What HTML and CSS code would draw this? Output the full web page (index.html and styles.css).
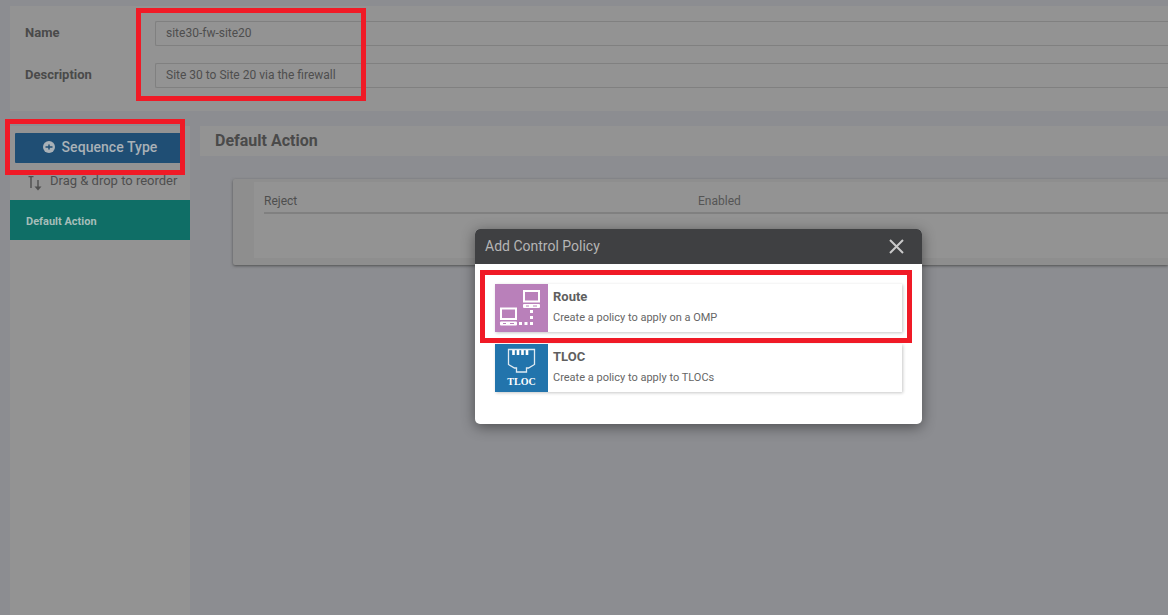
FILE: index.html
```html
<!DOCTYPE html>
<html lang="en">
<head>
<meta charset="utf-8">
<title>Add Control Policy</title>
<link rel="stylesheet" href="styles.css">
</head>
<body>
<div class="page">
  <section class="form-panel">
    <div class="form-row"><label class="form-label">Name</label><div class="form-input">site30-fw-site20</div></div>
    <div class="form-row"><label class="form-label">Description</label><div class="form-input">Site 30 to Site 20 via the firewall</div></div>
  </section>
  <div class="columns">
    <aside class="sidebar">
      <button class="seq-btn">
        <svg class="seq-icon" viewBox="0 0 12 12"><circle cx="6" cy="6" r="6" fill="#a9b1b7"/><path d="M2.500 6h7M6 3.500v5" stroke="#1f4e74" stroke-width="1.500"/></svg>
        <span class="seq-label">Sequence Type</span>
      </button>
      <div class="drag-hint">
        <svg class="drag-icon" viewBox="0 0 17 19"><path d="M4 3v11M1.500 2.600h5" stroke="#4f4f4f" stroke-width="1.400" fill="none"/><path d="M11 6v8" stroke="#4f4f4f" stroke-width="1.400"/><path d="M7.500 12.500h7L11 16.500z" fill="#4f4f4f"/></svg>
        Drag &amp; drop to reorder
      </div>
      <div class="seq-item">Default Action</div>
    </aside>
    <main class="main">
      <h2 class="main-title">Default Action</h2>
      <div class="action-card">
        <div class="action-inner">
          <div class="action-row"><span class="action-name">Reject</span><span class="action-state">Enabled</span></div>
        </div>
      </div>
    </main>
  </div>
</div>

<div class="annot annot-form"></div>
<div class="annot annot-seq"></div>

<div class="modal">
  <header class="modal-head">
    <span class="modal-title">Add Control Policy</span>
    <svg class="modal-close" viewBox="0 0 15 15"><path d="M1 1l13 13M14 1L1 14" stroke="#c9c9c9" stroke-width="2"/></svg>
  </header>
  <div class="modal-body">
    <div class="policy">
      <div class="policy-icon route">
        <svg viewBox="0 0 53 48" width="53" height="48" fill="none">
          <rect x="29" y="7" width="15" height="10.500" stroke="#fff" stroke-width="2"/>
          <rect x="28" y="20" width="17" height="4" rx="1" fill="#fff"/>
          <path d="M31 22h3M38 22h4" stroke="#b980ba"/>
          <rect x="6" y="24.500" width="15" height="10.500" stroke="#fff" stroke-width="2"/>
          <rect x="5" y="37.500" width="17" height="4" rx="1" fill="#fff"/>
          <path d="M8 39.500h3M15 39.500h4" stroke="#b980ba"/>
          <path d="M35 26h3v3h-3zM35 32h3v3h-3zM35 38h3v3h-3zM24 38h3v3h-3zM29.500 38h3v3h-3z" fill="#fff"/>
        </svg>
      </div>
      <div class="policy-text"><div class="policy-name">Route</div><div class="policy-desc">Create a policy to apply on a OMP</div></div>
    </div>
    <div class="policy">
      <div class="policy-icon tloc">
        <svg class="tloc-svg" viewBox="0 0 53 31" width="53" height="31" fill="none">
          <path d="M13.500 5.500h26v15l-6 3.500h-2v4h-10v-4h-2l-6-3.500z" stroke="#dfeaf2" stroke-width="1.300"/>
          <path d="M18.500 6v5M23 6v5M27.500 6v5M32 6v5" stroke="#fff" stroke-width="2.600"/>
        </svg>
        <span class="tloc-label">TLOC</span>
      </div>
      <div class="policy-text"><div class="policy-name">TLOC</div><div class="policy-desc">Create a policy to apply to TLOCs</div></div>
    </div>
  </div>
</div>
<div class="annot annot-route"></div>
</body>
</html>
```
FILE: styles.css
```css
* { box-sizing: border-box; }
html, body { margin: 0; height: 100%; }
body {
  background: #8c8d91;
  font-family: Roboto, "Liberation Sans", sans-serif;
  color: #4e4e4e;
  overflow: hidden;
}
.page {
  height: 615px;
  padding: 6px 0 0 10px;
  display: flex;
  flex-direction: column;
  gap: 15px;
}
.form-panel {
  background: #939393;
  height: 105px;
  padding: 15px 0 0 15px;
  display: flex;
  flex-direction: column;
  gap: 17px;
}
.form-row { display: flex; align-items: center; height: 25px; }
.form-label { width: 130px; margin-top: -3px; font-size: 13px; font-weight: 700; color: #4a4a4a; }
.form-input {
  flex: 1;
  height: 25px;
  border: 1px solid #808080;
  border-right: 0;
  border-radius: 2px 0 0 2px;
  padding: 0 0 0 10px;
  font-size: 12px;
  line-height: 23px;
  color: #4e4e4e;
}
.columns { flex: 1; display: flex; gap: 10px; }
.sidebar { width: 180px; background: #939393; display: flex; flex-direction: column; }
.seq-btn {
  margin: 7px 0 0 5px;
  width: 170px;
  height: 30px;
  border: 0;
  border-radius: 1px;
  background: #1f4e74;
  color: #a9b1b7;
  font: 500 14px Roboto, "Liberation Sans", sans-serif;
  letter-spacing: .05px;
  display: flex;
  align-items: center;
  justify-content: center;
  gap: 7px;
  padding: 0 0 3px;
}
.seq-icon { width: 12px; height: 12px; }
.seq-label { display: block; }
.drag-hint {
  height: 37px;
  padding: 0 0 2px 17px;
  display: flex;
  align-items: center;
  gap: 6px;
  font-size: 13px;
  color: #4e4e4e;
}
.drag-icon { width: 17px; height: 19px; margin-top: 6px; }
.seq-item {
  height: 40px;
  background: #0f6e66;
  color: #a5bdb9;
  font-size: 11px;
  font-weight: 700;
  line-height: 43px;
  padding-left: 16px;
}
.main { flex: 1; display: flex; flex-direction: column; }
.main-title {
  margin: 0;
  height: 30px;
  background: #939393;
  padding-left: 15px;
  font-size: 16px;
  font-weight: 700;
  line-height: 30px;
  color: #4a4a4a;
}
.action-card {
  margin: 23px 0 0 33px;
  height: 86px;
  background: #8e8e8e;
  border-radius: 2px 0 0 2px;
  box-shadow: 0 1px 3px #505050;
  padding: 3px 0 7px 21px;
  display: flex;
}
.action-inner { flex: 1; background: #939393; padding: 0 0 0 10px; }
.action-row {
  display: flex;
  height: 32px;
  border-bottom: 2px solid #808080;
  font-size: 12px;
  line-height: 39px;
  color: #4e4e4e;
}
.action-name { width: 434px; }
.action-state { color: #555; }
.annot { position: absolute; border: 5px solid #f01a26; pointer-events: none; }
.annot-form { left: 136px; top: 8px; width: 230px; height: 93px; }
.annot-seq { left: 5px; top: 119px; width: 180px; height: 56px; }
.annot-route { left: 480px; top: 270px; width: 432px; height: 73px; }
.modal {
  position: absolute;
  left: 475px;
  top: 229px;
  width: 447px;
  height: 195px;
  background: #fff;
  border-radius: 5px;
  overflow: hidden;
  box-shadow: 0 3px 14px rgba(0,0,0,.45);
}
.modal-head {
  height: 35px;
  background: #3f4042;
  display: flex;
  align-items: center;
  justify-content: space-between;
  padding: 0 18px 0 10px;
}
.modal-title { font-size: 14px; color: #b5b5b5; margin-top: -2px; }
.modal-close { width: 15px; height: 15px; }
.modal-body { padding: 20px 20px 0; display: flex; flex-direction: column; gap: 12px; }
.policy {
  display: flex;
  height: 48px;
  background: #fff;
  box-shadow: 1px 1px 3px rgba(0,0,0,.22);
}
.policy-icon { width: 53px; flex: none; }
.route { background: #b980ba; }
.tloc { background: #2274ac; display: flex; flex-direction: column; align-items: center; }
.tloc-svg { flex: none; }
.tloc-label {
  font: 700 10px/12px "Liberation Serif", serif;
  color: #fff;
  margin-top: 1px;
}
.policy-text { padding: 5px 0 0 5px; }
.policy-name { font-size: 13px; font-weight: 700; line-height: 16px; color: #5f5f5f; }
.policy-desc { font-size: 11px; line-height: 14px; margin-top: 6px; color: #666; }
```
